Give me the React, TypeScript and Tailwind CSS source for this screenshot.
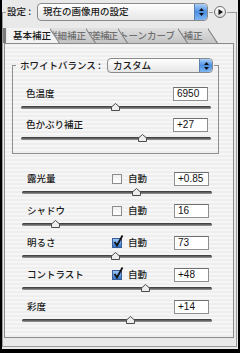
import React from "react";

const JP = "font-['Noto_Sans_CJK_JP',sans-serif] text-[9.5px] font-medium leading-none text-[#1b1b1b]";

function Stepper() {
    return (
        <div className="flex h-full w-[13px] flex-col items-center justify-center gap-[2px] rounded-r-[4px] border-l border-[#5a7fb0] bg-gradient-to-b from-[#a9cff7] via-[#4b8fe3] to-[#7fb6f2]">
            <svg width="5" height="3" viewBox="0 0 5 3"><path d="M2.5 0 L5 3 L0 3 Z" fill="#111" /></svg>
            <svg width="5" height="3" viewBox="0 0 5 3"><path d="M0 0 L5 0 L2.5 3 Z" fill="#111" /></svg>
        </div>
    );
}

function Select({ text, className }: { text: string; className: string }) {
    return (
        <div className={`flex items-stretch overflow-hidden rounded-[4px] border border-[#8a8a8a] bg-gradient-to-b from-white to-[#e6e6e6] ${className}`}>
            <span className={`${JP} flex flex-1 items-center pl-[5px]`}>{text}</span>
            <Stepper />
        </div>
    );
}

function Checkbox({ checked }: { checked: boolean }) {
    if (!checked)
        return <div className="h-[10px] w-[10px] border border-[#8d8d8d] bg-gradient-to-b from-[#f0f0f0] to-white" />;
    return (
        <div className="relative h-[10px] w-[10px] border border-[#3b5f95] bg-gradient-to-b from-[#9cc7f4] to-[#2f73cf]">
            <svg className="absolute -top-[4px] left-0" width="11" height="12" viewBox="0 0 11 12">
                <path d="M1.5 7 L4 10.5 L9.5 0.5" fill="none" stroke="#111" strokeWidth="1.8" />
            </svg>
        </div>
    );
}

function Slider({ pos }: { pos: number }) {
    return (
        <div className="relative h-[17px] w-[190px]">
            <div className="mt-[5px] h-[3px] rounded-full bg-gradient-to-b from-[#333333] to-[#999999]" />
            <svg className="absolute top-[2px]" style={{ left: pos - 4 }} width="9" height="8" viewBox="0 0 9 8">
                <path d="M4.5 0.5 L8.5 4 L8.5 7.5 L0.5 7.5 L0.5 4 Z" fill="#ededed" stroke="#4d4d4d" strokeWidth="1" />
            </svg>
        </div>
    );
}

type Ctrl = { label: string; value: string; pos: number; auto?: boolean };

function Control({ label, value, pos, auto }: Ctrl) {
    return (
        <div className="flex flex-col">
            <div className="flex h-[14px] items-center">
                <span className={`${JP} ml-[5px] w-[85px]`}>{label}</span>
                <div className="flex w-[62px] items-center gap-[6px]">
                    {auto !== undefined && (
                        <>
                            <Checkbox checked={auto} />
                            <span className={JP}>自動</span>
                        </>
                    )}
                </div>
                <div className="flex h-[14px] w-[35px] items-center border border-[#8e8e8e] border-t-[#6e6e6e] bg-white pl-[3px] font-['Liberation_Sans',sans-serif] text-[10px] leading-none text-[#111]">
                    {value}
                </div>
            </div>
            <Slider pos={pos} />
        </div>
    );
}

const whiteBalance: Ctrl[] = [
    { label: "色温度", value: "6950", pos: 94 },
    { label: "色かぶり補正", value: "+27", pos: 121 },
];

const tone: Ctrl[] = [
    { label: "露光量", value: "+0.85", pos: 114, auto: false },
    { label: "シャドウ", value: "16", pos: 33, auto: false },
    { label: "明るさ", value: "73", pos: 93, auto: true },
    { label: "コントラスト", value: "+48", pos: 123, auto: true },
    { label: "彩度", value: "+14", pos: 108 },
];

const tabShape = "[clip-path:polygon(0_0,calc(100%_-_10px)_0,100%_100%,0_100%)]";

function Slash() {
    return (
        <svg className="absolute right-0 top-0" width="10" height="15" viewBox="0 0 10 15">
            <line x1="0" y1="0" x2="10" y2="15" stroke="#7c7c7c" strokeWidth="2" />
        </svg>
    );
}

export default function App() {
    return (
        <div className="h-[353px] w-[240px] overflow-hidden border-b-4 border-l-2 border-r-2 border-black bg-[#e9e9e9]">
            <div className="mt-[12px] flex h-[335px] w-[235px] flex-col border-x border-b border-[#9b9b9b]">
                {/* header row cuts through the frame's top edge */}
                <div className="-mt-[9px] flex h-[18px] items-center">
                    <div className="h-px w-[3px] bg-[#9b9b9b]" />
                    <span className={`${JP} ml-[1px] w-[30px]`}>設定 :</span>
                    <Select text="現在の画像用の設定" className="h-[18px] w-[171px]" />
                    <div className="mx-[1px] h-px w-[4px] bg-[#9b9b9b]" />
                    <div className="flex h-[12px] w-[12px] items-center justify-center rounded-full border border-[#6d6d6d] bg-gradient-to-b from-white to-[#dadada]">
                        <svg width="5" height="6" viewBox="0 0 5 6"><path d="M0.5 0 L5 3 L0.5 6 Z" fill="#111" /></svg>
                    </div>
                    <div className="ml-[1px] h-px flex-1 bg-[#9b9b9b]" />
                </div>

                {/* tabs */}
                <div className="mt-[7px] flex h-[15px] items-stretch">
                    <div className="w-[3px] bg-[#7b7b7b]" />
                    <div className={`relative z-50 ml-[1px] flex w-[53px] items-center bg-[#f3f3f3] pl-[6px] ${tabShape}`}>
                        <span className={JP}>基本補正</span>
                        <Slash />
                    </div>
                    <div className={`relative z-40 -ml-[14px] flex w-[50px] items-center bg-gradient-to-b from-[#e0e0e0] to-[#c4c4c4] pl-[2px] ${tabShape}`}>
                        <span className={`${JP} text-[#707070]`}>詳細補正</span>
                        <Slash />
                    </div>
                    <div className={`relative z-30 -ml-[13px] flex w-[45px] items-center bg-gradient-to-b from-[#e0e0e0] to-[#c4c4c4] pl-0 ${tabShape}`}>
                        <span className={`${JP} tracking-[-1px] text-[#707070]`}>収差補正</span>
                        <Slash />
                    </div>
                    <div className={`relative z-20 -ml-[11px] flex w-[71px] items-center bg-gradient-to-b from-[#e0e0e0] to-[#c4c4c4] pl-[2px] ${tabShape}`}>
                        <span className={`${JP} text-[#707070]`}>トーンカーブ</span>
                        <Slash />
                    </div>
                    <div className={`relative z-10 -ml-[16px] flex w-[46px] items-center bg-gradient-to-b from-[#e0e0e0] to-[#c4c4c4] pl-[2px] ${tabShape}`}>
                        <span className={`${JP} text-[#707070]`}>色補正</span>
                        <Slash />
                    </div>
                </div>

                {/* panel */}
                <div className="ml-[1px] flex h-[295px] w-[230px] flex-col border border-[#8c8c8c] bg-[repeating-linear-gradient(0deg,#eeeeee_0px,#eeeeee_2px,#f6f6f6_2px,#f6f6f6_4px)]">
                    <div className="ml-[7px] mt-[21px] flex w-[207px] flex-col border-x border-b border-[#8f8f8f] pb-[4px]">
                        <div className="-mt-[7px] flex h-[15px] items-center">
                            <div className="h-px w-[3px] bg-[#8f8f8f]" />
                            <span className={`${JP} ml-[4px] w-[87px]`}>ホワイトバランス :</span>
                            <Select text="カスタム" className="h-[15px] w-[106px]" />
                            <div className="ml-[1px] h-px flex-1 bg-[#8f8f8f]" />
                        </div>
                        <div className="ml-[8px] mt-[14px] flex flex-col">
                            {whiteBalance.map(c => <Control key={c.label} {...c} />)}
                        </div>
                    </div>

                    <div className="ml-[17px] mt-[18px] flex flex-col gap-[1px]">
                        {tone.map(c => <Control key={c.label} {...c} />)}
                    </div>
                </div>
            </div>
        </div>
    );
}
